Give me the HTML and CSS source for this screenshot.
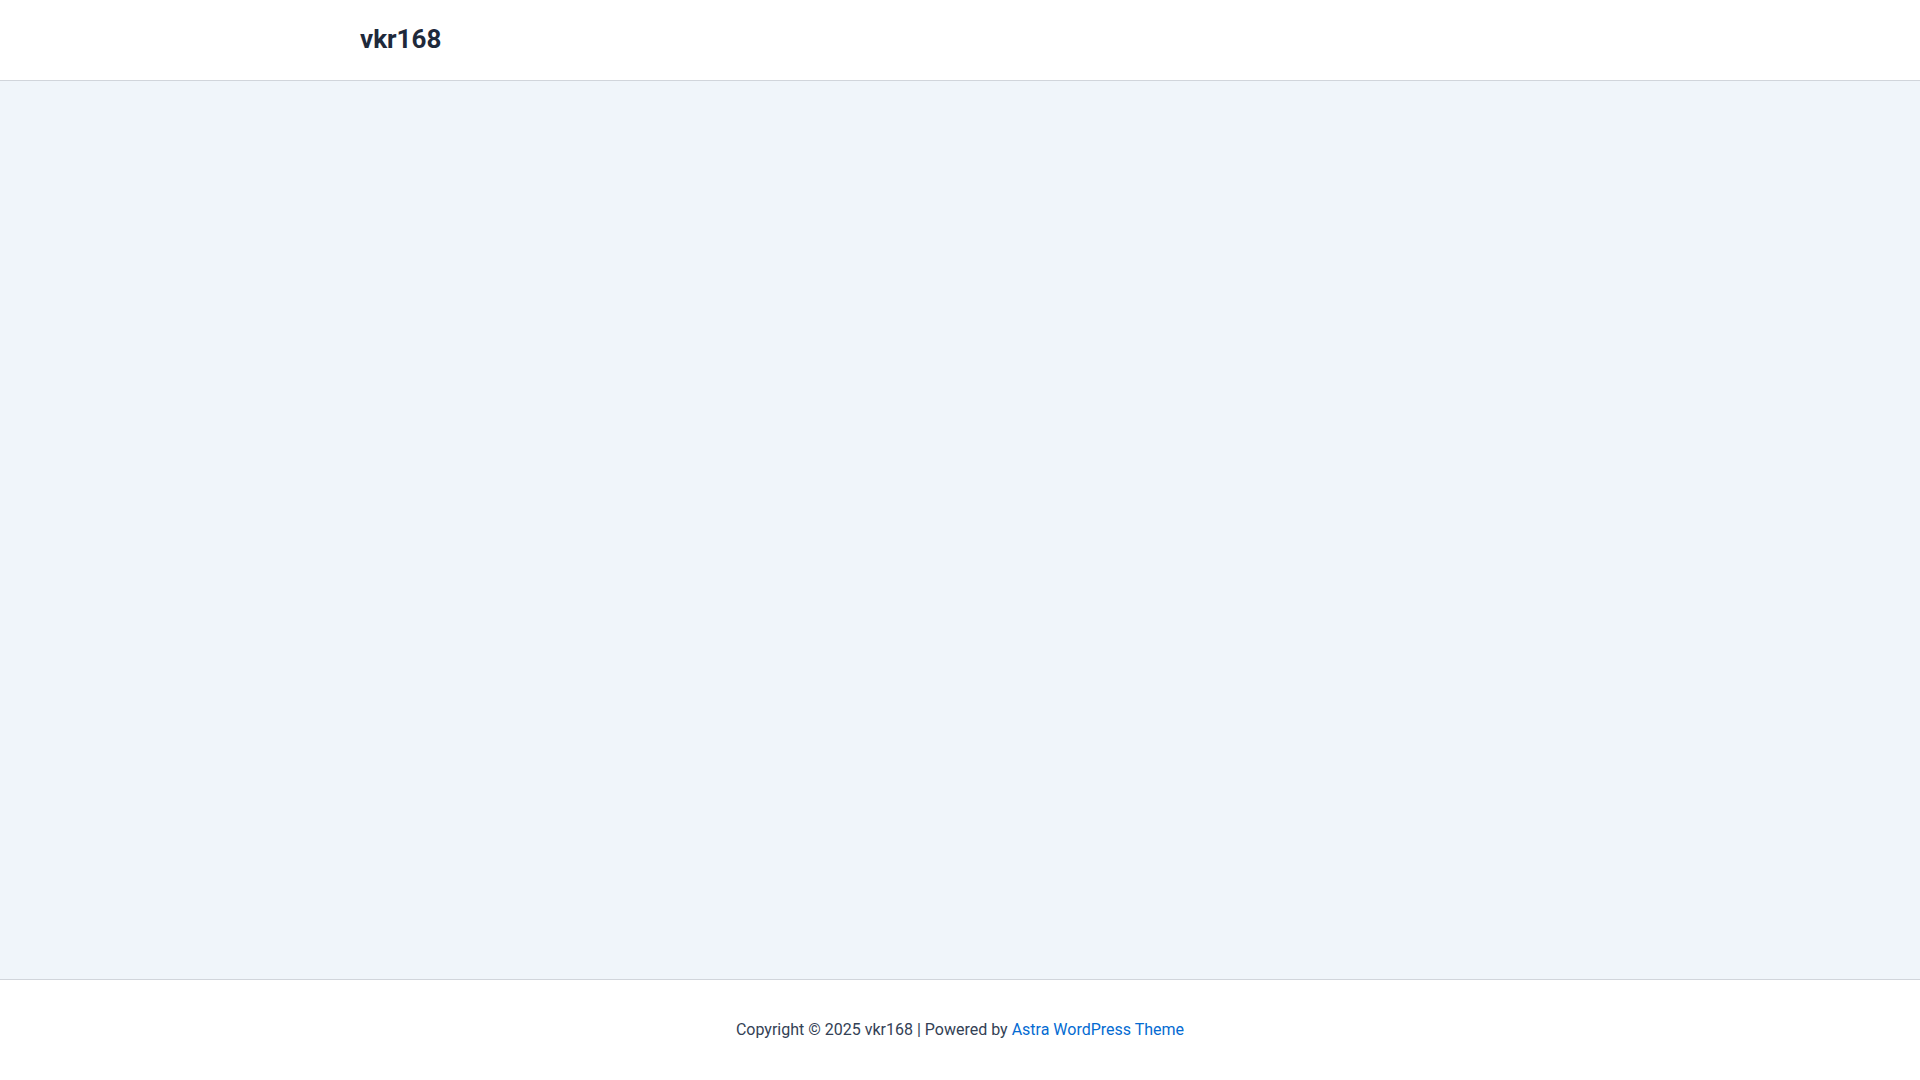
FILE: index.html
```html
<!DOCTYPE html>
<html lang="en">
<head>
<meta charset="utf-8">
<title>vkr168</title>
<link rel="stylesheet" href="styles.css">
</head>
<body>
<div class="page">
  <header class="site-header">
    <div class="container">
      <span class="site-title">vkr168</span>
    </div>
  </header>
  <main class="site-content"></main>
  <footer class="site-footer">
    <div class="copyright">Copyright © 2025 vkr168 | Powered by <a class="theme-link" href="#">Astra WordPress Theme</a></div>
  </footer>
</div>
</body>
</html>
```
FILE: styles.css
```css
html, body {
  margin: 0;
  padding: 0;
}
body {
  font-family: Roboto, "Liberation Sans", sans-serif;
  color: #334155;
  background: #ffffff;
}
.page {
  min-height: 100vh;
  display: flex;
  flex-direction: column;
}
.site-header {
  height: 80px;
  border-bottom: 1px solid #d1d5db;
  background: #ffffff;
  display: flex;
  align-items: center;
}
.container {
  width: 1200px;
  margin: 0 auto;
}
.site-title {
  font-size: 26px;
  font-weight: 700;
  color: #1e293b;
  line-height: 1;
  position: relative;
  top: -1px;
}
.site-content {
  flex: 1;
  background: #f0f5fa;
}
.site-footer {
  height: 101px;
  box-sizing: border-box;
  padding-bottom: 1px;
  border-top: 1px solid #d1d5db;
  background: #ffffff;
  display: flex;
  align-items: center;
  justify-content: center;
}
.copyright {
  font-size: 16px;
  line-height: 1.6;
  color: #334155;
}
.theme-link {
  color: #046bd2;
  text-decoration: none;
}
```
